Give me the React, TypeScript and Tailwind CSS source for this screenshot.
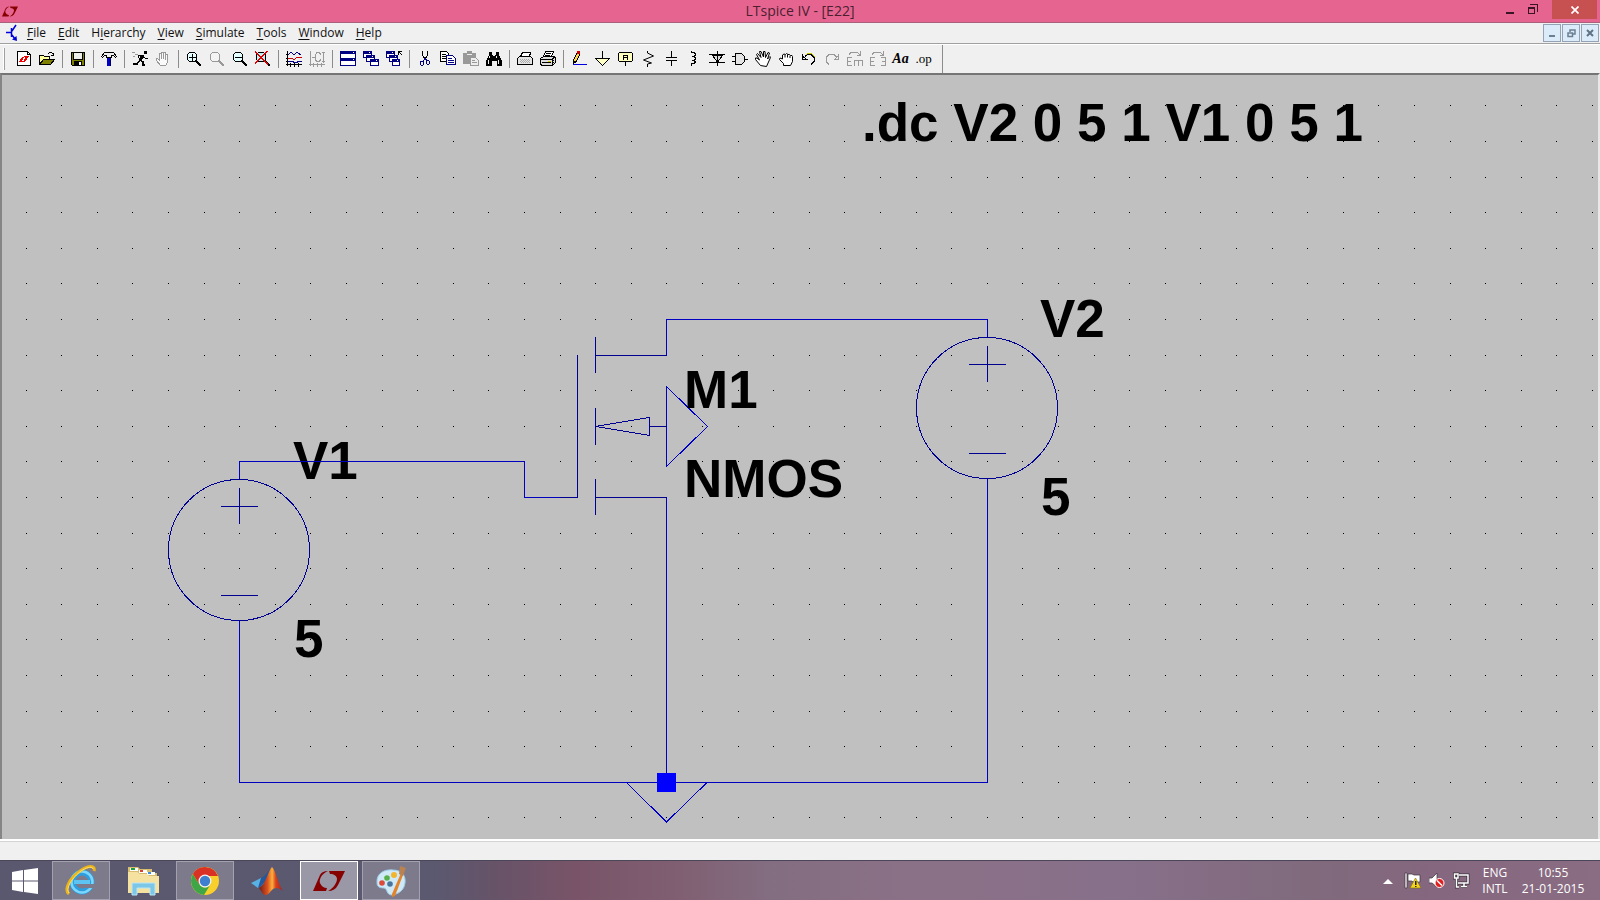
import type { ReactNode } from "react";

const UI = "font-['Open_Sans','Noto_Sans',sans-serif]";

function LinearLogo({ className }: { className: string }) {
  return (
    <svg viewBox="0 0 32 20" className={className} fill="#860000" aria-hidden="true">
      <path d="M0 20L7 4Q9 0 15 0C8 3 6 9 7 12 8 15 11 17 14 17L13 20Z" />
      <path d="M16 0H32L25 14Q22 20 15 20C21 17 24 11 24 8 24 5 21 3 17 3Z" />
    </svg>
  );
}

function Ico({ children }: { children: ReactNode }) {
  return (
    <svg width="16" height="16" viewBox="0 0 16 16" fill="none" stroke="#000" shapeRendering="crispEdges" aria-hidden="true">
      {children}
    </svg>
  );
}

const Magnifier = ({ color = "#000", glass = "#fff", children }: { color?: string; glass?: string; children?: ReactNode }) => (
  <Ico>
    <circle cx="6" cy="6" r="5" stroke={color} fill={glass} />
    <path d="M10 10l5 5" stroke={color} strokeWidth="2" />
    {children}
  </Ico>
);

const Win = ({ x, y, w = 9, h = 7 }: { x: number; y: number; w?: number; h?: number }) => (
  <g>
    <rect x={x + 0.5} y={y + 0.5} width={w - 1} height={h - 1} fill="#fff" stroke="#000080" />
    <rect x={x} y={y} width={w} height="3" fill="#000080" stroke="none" />
    <rect x={x + w - 3} y={y + 1} width="1" height="1" fill="#fff" stroke="none" />
  </g>
);

const tools: (null | { name: string; icon: ReactNode; disabled?: boolean })[] = [
  {
    name: "New Schematic",
    icon: (
      <Ico>
        <path d="M1.5 .5h10l3 3v11h-13z" fill="#fff" />
        <path d="M11.5 .5v3h3" />
        <path d="M3 11l3-5h2l-2 4h2l-1 1zM8 5h5l-3 5-3 1 2-4z" fill="#e00" stroke="none" />
      </Ico>
    ),
  },
  {
    name: "Open",
    icon: (
      <Ico>
        <path d="M.5 13.5v-9h4l1 1h5v3" fill="#ffff9c" />
        <path d="M.5 13.5l4-5h11l-4 5z" fill="#808000" />
        <path d="M9 2.5h1M10 1.5h3M13 2.5h1M14 3.5h1M12 4.5h3M14.5 2v3" />
      </Ico>
    ),
  },
  null,
  {
    name: "Save",
    icon: (
      <Ico>
        <path d="M1.5 1.5h13v13h-12l-1-1z" fill="#808000" />
        <path d="M4 2h8v6H4z" fill="#eee" stroke="none" />
        <path d="M3.5 2v6.5h9V2" />
        <path d="M4 10h8v5H4z" fill="#000" stroke="none" />
        <path d="M9 11h2v3H9z" fill="#fff" stroke="none" />
      </Ico>
    ),
  },
  null,
  {
    name: "Control Panel",
    icon: (
      <Ico>
        <path d="M.5 5.5l3-4h9l3 4-1 1-2-2h-2v2h-5v-2h-2l-2 2z" fill="#f0f0f0" />
        <path d="M6 7h4v8H6z" fill="#0000c8" stroke="none" />
        <path d="M9.5 7v8" stroke="#000050" />
      </Ico>
    ),
  },
  null,
  {
    name: "Run",
    icon: (
      <Ico>
        <path d="M12 0h3v3h-3z" fill="#000" stroke="none" />
        <path d="M11 4L8 9" strokeWidth="3" />
        <path d="M8 9l3 2v3h2M8 9l-3 4H1" strokeWidth="1.5" />
        <path d="M10 4.5H6.500v2M11 6l2 1h3" />
        <path d="M0 1.5h3M3 3.5h3M1 5.5h2" stroke="#999" />
      </Ico>
    ),
  },
  {
    name: "Halt",
    disabled: true,
    icon: (
      <Ico>
        <path d="M5.5 14.5l-4-5v-2h1l2 2v-7h2v5-6h2v6-6h2v7-5h2v8l-2 3z" stroke="#999" fill="#fafafa" />
      </Ico>
    ),
  },
  null,
  {
    name: "Zoom In",
    icon: (
      <Magnifier glass="#e4ffff">
        <path d="M3 6.5h7M6.5 3v7" />
      </Magnifier>
    ),
  },
  { name: "Pan", disabled: true, icon: <Magnifier color="#999" glass="#f4f4f4" /> },
  {
    name: "Zoom Back",
    icon: (
      <Magnifier glass="#e4ffff">
        <path d="M3 6.5h7" />
      </Magnifier>
    ),
  },
  {
    name: "Zoom Full Extents",
    icon: (
      <Magnifier glass="#b8f4f4">
        <path d="M0 1l13 12M12 0L0 13" stroke="#e00000" strokeWidth="1.5" />
      </Magnifier>
    ),
  },
  null,
  {
    name: "Autorange",
    icon: (
      <Ico>
        <path d="M1.5 0v15M0 13.5h16M4.5 12v4M8.5 12v4M12.5 12v4M0 3.5h1M0 7.5h1M0 10.5h1" />
        <path d="M2 4l3-3 3 3 3-3 4 3" stroke="#000080" />
        <path d="M2 7.5h4l2 1 3-2h5" stroke="#d00000" />
        <path d="M2 10.5h5v1h4v-1h5" stroke="#000080" />
      </Ico>
    ),
  },
  {
    name: "Axis Limits",
    disabled: true,
    icon: (
      <Ico>
        <path d="M1.5 0v15M0 13.5h16M4.5 12v4M8.5 12v4M12.5 12v4M3 6.5h3" stroke="#999" />
        <path d="M12 3.500L10 1.500H8l-2 3v4l2 2h2l2-2M14.5 1v11M13 1.500h3M13 10.5h3" stroke="#999" />
      </Ico>
    ),
  },
  null,
  {
    name: "Tile Windows",
    icon: (
      <Ico>
        <Win x={0} y={0} w={16} h={8} />
        <Win x={0} y={7} w={16} h={8} />
      </Ico>
    ),
  },
  {
    name: "Cascade Windows",
    icon: (
      <Ico>
        <Win x={0} y={0} />
        <Win x={3} y={4} />
        <Win x={7} y={8} />
      </Ico>
    ),
  },
  {
    name: "Close All Windows",
    icon: (
      <Ico>
        <Win x={0} y={0} />
        <Win x={3} y={4} />
        <Win x={6} y={8} w={8} />
        <path d="M12 .5h4M12.5 0v4M13 1l3 3" />
      </Ico>
    ),
  },
  null,
  {
    name: "Cut",
    icon: (
      <Ico>
        <path d="M5.5 0v4l3 5M10.5 0v4l-3 5" />
        <path d="M3.5 10.5h2l1 1v2l-1 1h-1l-1-1zM9.5 9.5h2l1 1v2l-1 1h-1l-1-1zM8 7l-2 4M8 7l2 3" stroke="#000080" />
      </Ico>
    ),
  },
  {
    name: "Copy",
    icon: (
      <Ico>
        <path d="M.5 .5h6l2 2v8h-8z" fill="#fff" />
        <path d="M2 3.500h4M2 5.500h5M2 7.500h5" />
        <path d="M6.500 4.500h6l3 3v6h-9z" fill="#fff" stroke="#000080" />
        <path d="M8 7.5h4M8 9.5h6M8 11.5h6" stroke="#000080" />
      </Ico>
    ),
  },
  {
    name: "Paste",
    disabled: true,
    icon: (
      <Ico>
        <path d="M0 2h4V0h5v2h4v11H0z" fill="#999" stroke="none" />
        <path d="M4 3.5h5" stroke="#eee" />
        <path d="M7.5 6.5h5l3 3v5h-8z" fill="#eee" stroke="#999" />
        <path d="M9 9.5h3M9 11.5h5" stroke="#999" />
      </Ico>
    ),
  },
  {
    name: "Find",
    icon: (
      <Ico>
        <path d="M3 1h3v3h1v1h2V4h1V1h3v3l1 2 2 4v5h-5v-5H6v5H0v-5l2-4 1-2z" fill="#000" stroke="none" />
        <path d="M3.5 5v2M2.5 9v4M10.5 5v2M12.5 9v4" stroke="#eee" />
      </Ico>
    ),
  },
  null,
  {
    name: "Print Setup",
    icon: (
      <Ico>
        <path d="M3.5 5.5l2-4h8l-1 4" fill="#fff" />
        <path d="M.5 7.500l2-2h11l2 2v6H.5z" fill="#e4e4e4" />
        <path d="M3 8.5h10M3 10.5h10" stroke="#aaa" strokeDasharray="1 1" />
        <path d="M4 9.5h9M4 11.5h9" stroke="#aaa" strokeDasharray="1 1" />
      </Ico>
    ),
  },
  {
    name: "Print",
    icon: (
      <Ico>
        <path d="M3.5 5.5l2-5h8l-2 5" fill="#fff" />
        <path d="M6 2.5h5M5 4.5h5" />
        <path d="M.5 7.5l3-2h11l1 2v4l-3 3h-11l-1-2z" fill="#ddd" />
        <path d="M1 8.5h11v5M12 8l3-2M2 11.5h9" />
        <path d="M8 10.5h3" stroke="#d8c800" />
        <path d="M13.5 7v6" strokeDasharray="1 1" />
      </Ico>
    ),
  },
  null,
  {
    name: "Wire",
    icon: (
      <Ico>
        <path d="M2.500 12v-3L6 2l3 1-4 8z" fill="#ffd84a" />
        <path d="M6 0h3v3H6z" fill="#d00000" stroke="none" />
        <path d="M2 10h3l-3 4z" fill="#000" stroke="none" />
        <path d="M2 13.5h14" stroke="#0000e0" />
      </Ico>
    ),
  },
  {
    name: "Ground",
    icon: (
      <Ico>
        <path d="M8.5 0v7" />
        <path d="M1.5 7.5h14l-7 7z" fill="#ffffc8" />
      </Ico>
    ),
  },
  {
    name: "Label Net",
    icon: (
      <Ico>
        <path d="M1.5 2.5l1-1h12l1 1v7l-1 1h-12l-1-1z" fill="#ffffc0" />
        <path d="M8.5 11v4M6.5 9V5l1-1h2l1 1v4M7 6.5h4" />
      </Ico>
    ),
  },
  {
    name: "Resistor",
    icon: (
      <Ico>
        <path d="M7.5 0v2l6 3-10 4 8 3-4 1v3" shapeRendering="auto" />
      </Ico>
    ),
  },
  {
    name: "Capacitor",
    icon: (
      <Ico>
        <path d="M8.5 0v6M8.5 9v6" />
        <path d="M3 6.5h11M3 9.5h11" />
      </Ico>
    ),
  },
  {
    name: "Inductor",
    icon: (
      <Ico>
        <path d="M5.5 0v1.5h2l2 1v2l-2 1h-2M7.5 5.5l2 1v2l-2 1h-2M7.5 9.5l2 1v1l-2 1h-2V15" />
      </Ico>
    ),
  },
  {
    name: "Diode",
    icon: (
      <Ico>
        <path d="M3 4l5.5 7L14 4z" fill="#ddd" />
        <path d="M8.5 0v15M0 3.5h16M0 11.5h16" />
      </Ico>
    ),
  },
  {
    name: "Component",
    icon: (
      <Ico>
        <path d="M0 5.5h4M0 10.5h4M12 8h4" />
        <path d="M3.5 2.5h6l3 3v5l-3 3h-6z" fill="#e4e4e4" />
      </Ico>
    ),
  },
  {
    name: "Move",
    icon: (
      <Ico>
        <g shapeRendering="auto">
          <path d="M5.500 14.500l-5-6v-1.500h1.500l2.500 2-3-5.500 1-1 3.500 4-1.500-6h1.500l2.500 5.500V.500h1.500l.5 6 2.500-5 1.500.500-2 6 2.500-2.500.500 1-4 9z" fill="#fff" />
        </g>
      </Ico>
    ),
  },
  {
    name: "Drag",
    icon: (
      <Ico>
        <g shapeRendering="auto">
          <path d="M5.500 14.500v-2l-4-4 .5-1.500 2.500 1v-4l1.500-1 1.500.500 1-1 1.500 1h1.500l1 1h1.500l.500 1v5l-2 4z" fill="#fff" />
          <path d="M7 3.500v3M9.500 3.500v3M12 4.500v2.500" />
        </g>
      </Ico>
    ),
  },
  {
    name: "Undo",
    icon: (
      <Ico>
        <path d="M3 7l3-3.500h4l3 3v4l-3 3" />
        <path d="M5 4l2-2h3l4 4" stroke="#c8c800" />
        <path d="M1.5 3v5h5M2 6.500h2M2 5l3 3" />
      </Ico>
    ),
  },
  {
    name: "Redo",
    disabled: true,
    icon: (
      <Ico>
        <path d="M5 13.5l-3-3v-4l3-3h5l3 3" stroke="#999" />
        <path d="M14.5 3v5h-5M11 8l3-3" stroke="#999" />
      </Ico>
    ),
  },
  {
    name: "Rotate",
    disabled: true,
    icon: (
      <Ico>
        <path d="M5 14.5H.5v-8H5M1 10.5h3M7.5 15V9.5h8V15M11.5 10v5" stroke="#999" />
        <path d="M2 4l2-3h6l3 3M13.5 0v4.5H10" stroke="#999" />
      </Ico>
    ),
  },
  {
    name: "Mirror",
    disabled: true,
    icon: (
      <Ico>
        <path d="M5 14.5H.5v-8H5M1 10.5h3M11 14.5h4.5v-8H11M12 10.5h3" stroke="#999" />
        <path d="M2 4l2-3h6l3 3M13.5 0v4.5H10" stroke="#999" />
      </Ico>
    ),
  },
  { name: "Text", icon: <span className="font-['Liberation_Serif',serif] text-[14px] leading-4 font-bold italic">Aa</span> },
  { name: "SPICE Directive", icon: <span className="font-['Liberation_Serif',serif] text-[13px] leading-4">.op</span> },
];

const menus = [
  ["", "F", "ile"],
  ["", "E", "dit"],
  ["H", "i", "erarchy"],
  ["", "V", "iew"],
  ["", "S", "imulate"],
  ["", "T", "ools"],
  ["", "W", "indow"],
  ["", "H", "elp"],
];

function TitleBar() {
  return (
    <header className={`${UI} relative flex h-[23px] items-center justify-center border-b border-[#a8607c] bg-[#e66590]`}>
      <LinearLogo className="absolute left-[2px] h-[11px] w-4" />
      <h1 className="text-[14px] leading-5 text-[#4a1f30]">LTspice IV - [E22]</h1>
      <div className="absolute top-0 right-[3px] flex h-[19px]">
        <button aria-label="Minimize" className="flex w-7 items-center justify-center">
          <svg width="10" height="14" aria-hidden="true">
            <path d="M1 9h8v2H1z" fill="#3a1424" />
          </svg>
        </button>
        <button aria-label="Restore" className="flex w-7 items-center justify-start pl-1">
          <svg width="10" height="11" fill="none" stroke="#3a1424" shapeRendering="crispEdges" aria-hidden="true">
            <path d="M2 .5h7.5V8M.5 3.5h6v6h-6z" />
            <path d="M0 3h7v2H0z" fill="#3a1424" stroke="none" />
          </svg>
        </button>
        <button aria-label="Close" className="flex w-[45px] items-center justify-center bg-[#c75050]">
          <svg width="8" height="8" stroke="#fff" strokeWidth="1.7" aria-hidden="true">
            <path d="M.5 .5l7 7M7.5 .5l-7 7" />
          </svg>
        </button>
      </div>
    </header>
  );
}

const mdi = "flex size-[18px] items-center justify-center border border-[#93a3b5] bg-[#dcebf9]";

function MenuBar() {
  return (
    <nav className={`${UI} flex h-[21px] items-center border-b border-[#a0a0a0] bg-[#f0f0f0] pr-px pl-1`}>
      <svg width="14" height="18" fill="none" stroke="#0000d8" strokeWidth="1.5" aria-hidden="true">
        <path d="M2 8.5h5M7.5 4v9M8 7l4-6M8 11l3 4" />
        <path d="M8 15.500l5 1.500-.500-5z" fill="#0000d8" stroke="none" />
      </svg>
      <div className="ml-[9px] flex flex-1 gap-3 text-[12px] leading-4 text-[#111]">
        {menus.map(([a, b, c]) => (
          <button key={b + c}>
            {a}
            <u className="underline-offset-2">{b}</u>
            {c}
          </button>
        ))}
      </div>
      <div className="flex gap-px">
        <button aria-label="Minimize document" className={mdi}>
          <svg width="8" height="10" aria-hidden="true">
            <path d="M1 7h6v2H1z" fill="#6b7f92" />
          </svg>
        </button>
        <button aria-label="Restore document" className={mdi}>
          <svg width="9" height="9" fill="none" stroke="#6b7f92" strokeWidth="1.5" aria-hidden="true">
            <path d="M3 3V1h5v4H6M1 4h4.5v3.5H1z" />
          </svg>
        </button>
        <button aria-label="Close document" className={mdi}>
          <svg width="8" height="8" stroke="#5f7386" strokeWidth="2" aria-hidden="true">
            <path d="M1 1l6 6M7 1l-6 6" />
          </svg>
        </button>
      </div>
    </nav>
  );
}

function ToolBar() {
  return (
    <div className="flex h-[29px] border-t border-white bg-[#f0f0f0]">
      <div role="toolbar" aria-label="Schematic tools" className="flex items-center border-r border-[#8c8c8c] pr-[7px]">
        <div className="mr-[7px] ml-[3px] h-[22px] w-[2px] border-r border-[#a0a0a0] bg-white" />
        {tools.map((t, i) =>
          t ? (
            <button key={i} aria-label={t.name} disabled={t.disabled} className="flex h-6 w-[23px] items-center justify-center text-black">
              {t.icon}
            </button>
          ) : (
            <div key={i} className="flex w-2 justify-center">
              <div className="h-[18px] w-px bg-[#8c8c8c]" />
            </div>
          ),
        )}
      </div>
    </div>
  );
}

const PITCH = 35.6;
const dots: [number, number][] = [];
for (let j = 0; j < 21; j++) {
  for (let i = 0; i < 45; i++) {
    dots.push([Math.round(25.6 + i * PITCH), Math.round(105.3 + j * PITCH)]);
  }
}

function Source({ x, y }: { x: number; y: number }) {
  return (
    <g stroke="#000090">
      <circle cx={x} cy={y} r="70.5" />
      <path d={`M${x - 18.5} ${y - 43.5}h37M${x + 0.5} ${y - 62}v36M${x - 18.5} ${y + 45.5}h37`} />
    </g>
  );
}

const labels: [number, number, string][] = [
  [862, 141, ".dc V2 0 5 1 V1 0 5 1"],
  [1040, 337, "V2"],
  [1041, 515, "5"],
  [684, 408, "M1"],
  [684, 497, "NMOS"],
  [293, 479, "V1"],
  [294, 657, "5"],
];

function Schematic() {
  return (
    <main className="flex flex-1 border-t-2 border-r-2 border-l-2 border-t-[#757575] border-r-[#e8e8e8] border-l-[#858585] bg-[#c0c0c0]">
      <svg className="min-h-[764px] w-full" shapeRendering="crispEdges" role="img" aria-label="NMOS test circuit">
        <g transform="translate(-2 -75)" fill="none">
          <path d={dots.map(([x, y]) => `M${x} ${y}h1v1h-1z`).join("")} fill="#000" />
          <path d="M666.5 386.5l41 40-41 40z" stroke="#0000c0" />
          <g fill="#000" className="font-['Liberation_Sans',Arial,sans-serif] text-[53px] font-bold [font-kerning:none]">
            {labels.map(([x, y, t]) => (
              <text key={t + x} x={x} y={y}>
                {t}
              </text>
            ))}
          </g>
          <g stroke="#0000c0">
            <path d="M239.5 479V461.5H524.5V497.5H560M239.5 621V782.5H987.5V479M666.5 355V319.5H987.5V337M666.5 497V782" />
            <path d="M626.5 782.5l40 39.5 40.5-39.5" />
          </g>
          <Source x={239} y={550} />
          <Source x={987} y={408} />
          <g stroke="#000090">
            <path d="M560 497.5h17.5V355M595.5 337v36M595.5 408v37M595.5 479v36M595 355.5h71.5M595 497.5h71.5M649 426.5h17.5" />
            <path d="M595.5 426.5l54-9v18z" />
          </g>
          <path d="M657 773h19v19h-19z" fill="#0000ff" />
        </g>
      </svg>
    </main>
  );
}

const slot = "flex h-[39px] w-[58px] items-center justify-center";
const openSlot = `${slot} border border-[#a3a1b0] bg-[#7c7a8b]`;

function TaskBar() {
  return (
    <footer
      className={`${UI} flex h-10 items-start border-t border-[#4b4759] bg-[linear-gradient(90deg,#5a586f_0%,#5a5970_27%,#675368_31%,#795468_36%,#805e71_42%,#836d80_48%,#8b7187_57%,#87708a_70%,#806a7c_82%,#85677f_90%,#8a6d83_100%)] text-white`}
    >
      <button aria-label="Start" className="mr-[2px] flex h-[39px] w-[50px] items-center justify-center">
        <svg width="26" height="26" fill="#fff" aria-hidden="true">
          <path d="M0 4l11-2v10.5H0zM12 2l14-2v12.5H12zM0 13.5h11V24L0 22zM12 13.5h14V26l-14-2z" />
        </svg>
      </button>
      <div className="flex gap-1">
        <button aria-label="Internet Explorer" className={openSlot}>
          <svg width="32" height="32" fill="none" aria-hidden="true">
            <circle cx="17" cy="17" r="9.5" stroke="#2b9fe0" strokeWidth="6" />
            <circle cx="17" cy="17" r="10.5" stroke="#7ed6fa" strokeWidth="2.5" />
            <path d="M9 15h16v4H9z" fill="#5cc3f3" />
            <path d="M19 19h12v4H19z" fill="#7c7a8b" />
            <path d="M4 29C-2 24 6 12 15 6 23 0 31 0 29 6" stroke="#e9b41c" strokeWidth="3" />
            <path d="M4 28C0 23 8 12 16 6 22 2 28 1 28 4" stroke="#ffe16a" />
          </svg>
        </button>
        <button aria-label="File Explorer" className={slot}>
          <svg width="32" height="30" aria-hidden="true">
            <path d="M1 6V1h10l2 2h12v4h5v20H1z" fill="#d9bd6e" />
            <path d="M3 2h8v3H3zM12 4h8v3h-8zM20 6h8v3h-8z" fill="#fff" />
            <path d="M4 2h4v2H4z" fill="#19a33a" />
            <path d="M13 4h3v2h-3z" fill="#d9432f" />
            <path d="M21 6h3v2h-3z" fill="#3a8ddd" />
            <path d="M1 6h9l3 2h7l2 2h10v17H1z" fill="#f5e2a0" />
            <path d="M5 29V17h23v12h-5v-7H10v7z" fill="#7cc7e8" stroke="#b9e6f7" />
          </svg>
        </button>
        <button aria-label="Chrome" className={openSlot}>
          <svg width="30" height="30" viewBox="-15 -15 30 30" aria-hidden="true">
            <circle r="14" fill="#f9cf2b" />
            <path d="M-12.1-7A14 14 0 0 0-1 14L5.6 3.3A6.5 6.5 0 0 1-5.6 3.3Z" fill="#3fa648" />
            <path d="M-12.1-7A14 14 0 0 1 13-5H0L-5.6 3.3Z" fill="#da3125" />
            <circle r="6.5" fill="#f3f3f3" />
            <circle r="5.2" fill="#3f7fd0" />
          </svg>
        </button>
        <button aria-label="MATLAB" className={slot}>
          <svg width="32" height="30" aria-hidden="true">
            <defs>
              <linearGradient id="peak" x1="0" x2="1">
                <stop offset="0" stopColor="#6d1d17" />
                <stop offset=".35" stopColor="#d9501e" />
                <stop offset=".55" stopColor="#fbb03b" />
                <stop offset=".7" stopColor="#d8401c" />
                <stop offset="1" stopColor="#a3201b" />
              </linearGradient>
            </defs>
            <path d="M0 17l10-5 5 4-8 6z" fill="#58b0e3" />
            <path d="M10 12c4-1 7-7 10-10l-4 12-6 6-3 2z" fill="#23589a" />
            <path d="M8 22c7-3 9-18 13-21 4 3 6 18 11 24-5-4-9-4-12 0-3 4-5 5-8 3z" fill="url(#peak)" />
          </svg>
        </button>
        <button aria-label="LTspice IV" className={`${slot} border border-white bg-[#9a98a6]`}>
          <LinearLogo className="h-5 w-8" />
        </button>
        <button aria-label="Paint" className={openSlot}>
          <svg width="32" height="32" aria-hidden="true">
            <path d="M2 18C1 8 10 4 18 5c9 0 13 6 12 13-1 8-7 11-13 12-6 0-4-6-8-7-4 0-7-1-7-5z" fill="#cfe9f7" stroke="#9ccbe6" />
            <circle cx="7" cy="18" r="2.8" fill="#dc4a3a" />
            <circle cx="12" cy="13" r="2.8" fill="#55b04a" />
            <circle cx="19" cy="10" r="3" fill="#f3b52c" />
            <circle cx="15" cy="19" r="2.8" fill="#47759e" />
            <path d="M26 8l2 2-8 21-3 1 0-3z" fill="#e2842c" />
            <path d="M25 1l6 2-3 8-4-2z" fill="#b98252" />
          </svg>
        </button>
      </div>
      <div className="ml-auto flex h-[39px] items-center pr-[18px] text-[12px] leading-4">
        <button aria-label="Show hidden icons" className="mr-[11px]">
          <svg width="10" height="6" className="block" aria-hidden="true">
            <path d="M0 6l5-5 5 5z" fill="#fff" />
          </svg>
        </button>
        <div className="mr-3 flex items-center gap-2">
          <svg width="17" height="17" aria-hidden="true">
            <path d="M1 1h2v15H1zM4 2h4l2 1h6v7H9L8 9H4z" fill="#fff" stroke="#3b303a" strokeWidth=".7" />
            <path d="M11.5 6l5.5 10H6z" fill="#f5d61d" stroke="#7a6a10" strokeWidth=".6" />
            <path d="M11 9h1.5v4H11zM11 14h1.5v1H11z" fill="#222" />
          </svg>
          <svg width="16" height="17" aria-hidden="true">
            <path d="M0 6h3l5-5v14l-5-4H0z" fill="#fff" stroke="#3b303a" strokeWidth=".7" />
            <circle cx="10.5" cy="11" r="4.5" fill="#e02020" stroke="#fff" />
            <path d="M8 8.5l5 5" stroke="#fff" strokeWidth="1.5" />
          </svg>
          <svg width="17" height="17" fill="none" aria-hidden="true">
            <path d="M6 3h9v8H5M8 14.5h6M11 11v3M1.5 2H5v4H1.5zM3.5 6v9H6" stroke="#3b303a" strokeWidth="3" />
            <path d="M6 3h9v8H5M8 14.5h6M11 11v3M1.5 2H5v4H1.5zM3.5 6v9H6" stroke="#fff" strokeWidth="1.5" />
          </svg>
        </div>
        <button aria-label="Input language" className="mr-4 flex w-[26px] flex-col items-center">
          <span>ENG</span>
          <span>INTL</span>
        </button>
        <button aria-label="Date and time" className="flex w-[58px] flex-col items-center whitespace-nowrap">
          <span>10:55</span>
          <span>21-01-2015</span>
        </button>
      </div>
    </footer>
  );
}

export default function App() {
  return (
    <div className="flex min-h-screen flex-col overflow-hidden bg-[#f0f0f0]">
      <TitleBar />
      <MenuBar />
      <ToolBar />
      <Schematic />
      <div role="status" className="h-[21px] border-t-2 border-white bg-[#f0f0f0]">
        <div className="border-t border-[#d4d4d4]" />
      </div>
      <TaskBar />
    </div>
  );
}
